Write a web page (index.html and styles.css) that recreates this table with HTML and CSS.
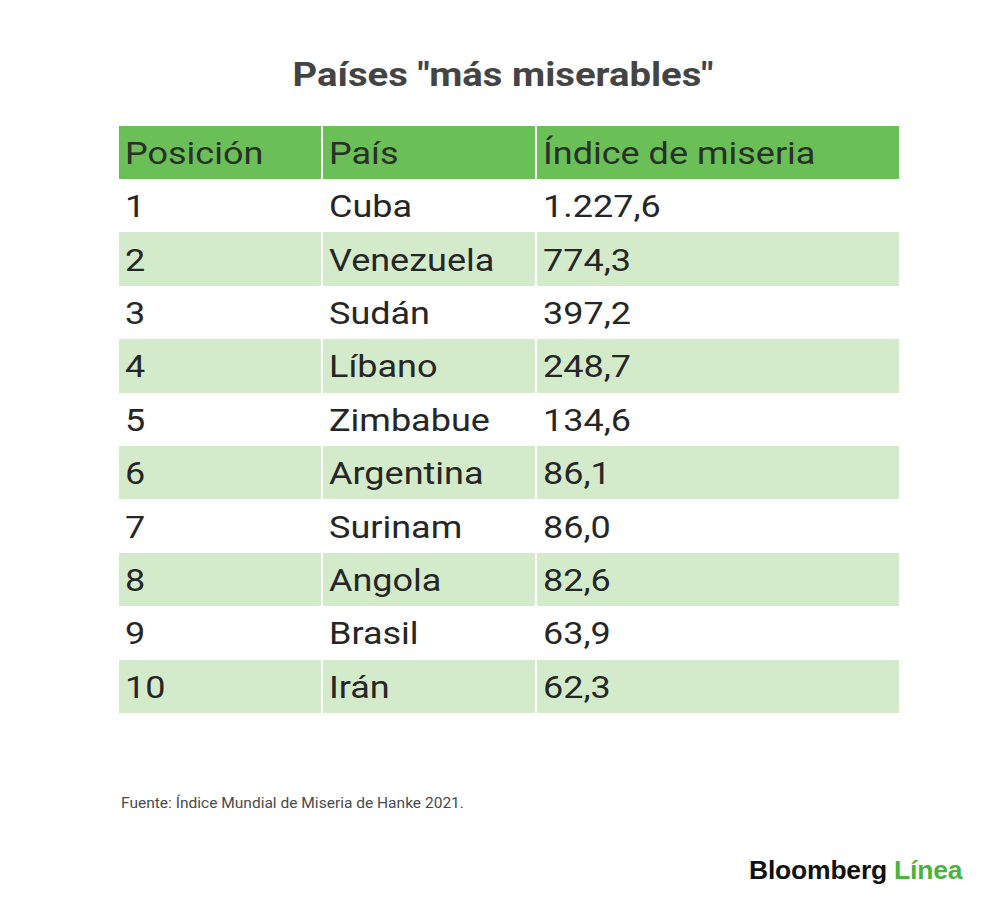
FILE: index.html
```html
<!DOCTYPE html>
<html lang="es">
<head>
<meta charset="utf-8">
<title>Países "más miserables"</title>
<link rel="stylesheet" href="styles.css">
</head>
<body>
<div class="page">
  <h1 class="title"><span class="wide">Países "más miserables"</span></h1>
  <div class="table">
    <div class="row head"><div class="cell"><span class="wide">Posición</span></div><div class="cell"><span class="wide">País</span></div><div class="cell"><span class="wide">Índice de miseria</span></div></div>
    <div class="row"><div class="cell"><span class="wide">1</span></div><div class="cell"><span class="wide">Cuba</span></div><div class="cell"><span class="wide">1.227,6</span></div></div>
    <div class="row alt"><div class="cell"><span class="wide">2</span></div><div class="cell"><span class="wide">Venezuela</span></div><div class="cell"><span class="wide">774,3</span></div></div>
    <div class="row"><div class="cell"><span class="wide">3</span></div><div class="cell"><span class="wide">Sudán</span></div><div class="cell"><span class="wide">397,2</span></div></div>
    <div class="row alt"><div class="cell"><span class="wide">4</span></div><div class="cell"><span class="wide">Líbano</span></div><div class="cell"><span class="wide">248,7</span></div></div>
    <div class="row"><div class="cell"><span class="wide">5</span></div><div class="cell"><span class="wide">Zimbabue</span></div><div class="cell"><span class="wide">134,6</span></div></div>
    <div class="row alt"><div class="cell"><span class="wide">6</span></div><div class="cell"><span class="wide">Argentina</span></div><div class="cell"><span class="wide">86,1</span></div></div>
    <div class="row"><div class="cell"><span class="wide">7</span></div><div class="cell"><span class="wide">Surinam</span></div><div class="cell"><span class="wide">86,0</span></div></div>
    <div class="row alt"><div class="cell"><span class="wide">8</span></div><div class="cell"><span class="wide">Angola</span></div><div class="cell"><span class="wide">82,6</span></div></div>
    <div class="row"><div class="cell"><span class="wide">9</span></div><div class="cell"><span class="wide">Brasil</span></div><div class="cell"><span class="wide">63,9</span></div></div>
    <div class="row alt"><div class="cell"><span class="wide">10</span></div><div class="cell"><span class="wide">Irán</span></div><div class="cell"><span class="wide">62,3</span></div></div>
  </div>
  <p class="source"><span class="wide">Fuente: Índice Mundial de Miseria de Hanke 2021.</span></p>
  <div class="logo"><span class="brand">Bloomberg</span> <span class="linea">Línea</span></div>
</div>
</body>
</html>
```
FILE: styles.css
```css
html, body {
  margin: 0;
  padding: 0;
  background: #ffffff;
}
.page {
  width: 1000px;
  height: 904px;
  box-sizing: border-box;
  padding-top: 52px;
  font-family: Roboto, "Noto Sans", sans-serif;
  color: #262626;
}
.wide {
  display: inline-block;
  transform: scaleX(1.125);
  transform-origin: 0 50%;
  white-space: nowrap;
}
.title {
  margin: 0 0 0 7px;
  text-align: center;
  font-size: 34px;
  font-weight: 700;
  color: #444444;
  line-height: 44px;
  height: 44px;
}
.title .wide {
  transform-origin: 50% 50%;
}
.table {
  margin: 30px 0 0 119px;
  width: 780px;
  display: flex;
  flex-direction: column;
}
.row {
  display: grid;
  grid-template-columns: 202px 212px 1fr;
  column-gap: 2px;
  height: 53.4px;
}
.row.head {
  height: 53px;
}
.cell {
  display: flex;
  align-items: center;
  padding-left: 6px;
  font-size: 32px;
  line-height: 1;
  padding-top: 1px;
}
.head .cell {
  background: #6abf57;
  color: #2a2f2a;
}
.alt .cell {
  background: #d3ebcb;
}
.source {
  margin: 82px 0 0 121px;
  font-size: 13.8px;
  color: #4a4a4a;
  line-height: 16px;
}
.logo {
  margin: 44px 0 0 749px;
  font-family: "Liberation Sans", Arial, sans-serif;
  font-weight: 700;
  font-size: 25px;
  letter-spacing: -0.2px;
  line-height: 30px;
  display: inline-block;
  transform: scaleX(1.06);
  transform-origin: 0 50%;
  white-space: nowrap;
}
.brand {
  color: #111111;
}
.linea {
  color: #4bb33c;
}
```
